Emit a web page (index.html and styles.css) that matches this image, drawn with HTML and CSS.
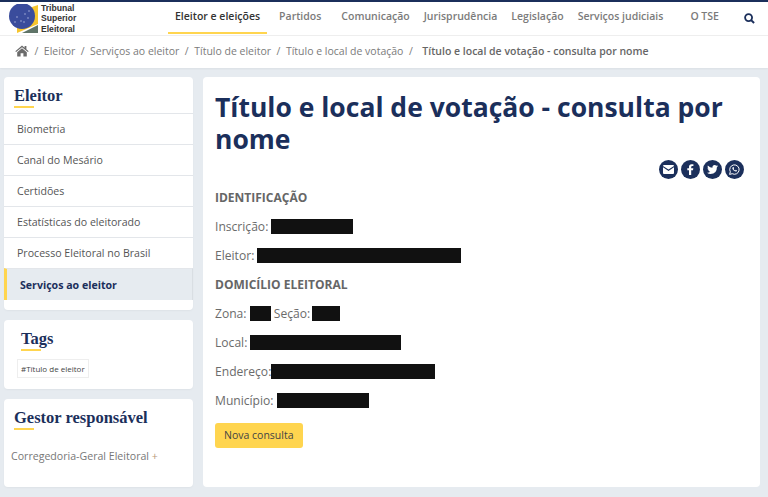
FILE: index.html
```html
<!DOCTYPE html>
<html lang="pt-BR">
<head>
  <meta charset="UTF-8" />
  <title>Título e local de votação - consulta por nome</title>
  <link rel="stylesheet" href="styles.css">
</head>
<body>
  <header class="topbar">
    <a class="logo" href="#">
      <svg class="logo-mark" width="30" height="30" viewBox="0 0 30 30">
        <polygon points="8,8 29,1 29,20 8,29" fill="#f6c52d"/>
        <polygon points="13,29 29,21 29,29" fill="#5f7468"/>
        <circle cx="13" cy="12" r="13" fill="#3a4c9c"/>
        <g fill="#b9c3e6">
          <circle cx="8" cy="13" r="0.7"/>
          <circle cx="12" cy="17" r="0.7"/>
          <circle cx="16" cy="10" r="0.7"/>
          <circle cx="19" cy="14" r="0.7"/>
          <circle cx="15" cy="18" r="0.7"/>
          <circle cx="6" cy="18" r="0.7"/>
          <circle cx="20" cy="7" r="0.7"/>
        </g>
      </svg>
      <span class="logo-text">Tribunal<br>Superior<br>Eleitoral</span>
    </a>
    <ul class="nav">
      <li class="active"><a href="#">Eleitor e eleições</a></li>
      <li class="nav-partidos"><a href="#">Partidos</a></li>
      <li class="nav-wide"><a href="#">Comunicação</a></li>
      <li><a href="#">Jurisprudência</a></li>
      <li><a href="#">Legislação</a></li>
      <li><a href="#">Serviços judiciais</a></li>
      <li class="nav-tse"><a href="#">O TSE</a></li>
    </ul>
    <svg class="search" width="11" height="11" viewBox="0 0 12 12">
      <circle cx="5" cy="5" r="3.8" fill="none" stroke="#1b2f5b" stroke-width="2"/>
      <line x1="7.8" y1="7.8" x2="11" y2="11" stroke="#1b2f5b" stroke-width="2.2"/>
    </svg>
  </header>

  <div class="breadcrumb">
    <svg class="home" width="14" height="12" viewBox="0 0 14 12">
      <path d="M7 0.6 L0.3 6.2 L1.1 7.1 L7 2.2 L12.9 7.1 L13.7 6.2 L11.4 4.3 V1 H9.6 V2.8 Z" fill="#6b6b6b"/>
      <path d="M7 3.2 L2.2 7.2 V11.6 H5.6 V8.2 H8.4 V11.6 H11.8 V7.2 Z" fill="#6b6b6b"/>
    </svg>
    <span>/</span><a href="#">Eleitor</a>
    <span>/</span><a href="#">Serviços ao eleitor</a>
    <span>/</span><a href="#">Título de eleitor</a>
    <span>/</span><a href="#">Título e local de votação</a>
    <span class="sep-last">/</span><strong>Título e local de votação - consulta por nome</strong>
  </div>

  <div class="page">
    <aside class="sidebar">
      <section class="card card-menu">
        <h3 class="side-title">Eleitor</h3>
        <ul class="side-menu">
          <li><a href="#">Biometria</a></li>
          <li><a href="#">Canal do Mesário</a></li>
          <li><a href="#">Certidões</a></li>
          <li><a href="#">Estatísticas do eleitorado</a></li>
          <li><a href="#">Processo Eleitoral no Brasil</a></li>
          <li class="current"><a href="#">Serviços ao eleitor</a></li>
        </ul>
      </section>
      <section class="card card-tags">
        <h3 class="side-title">Tags</h3>
        <a class="tag" href="#">#Título de eleitor</a>
      </section>
      <section class="card card-gestor">
        <h3 class="side-title">Gestor responsável</h3>
        <p class="gestor">Corregedoria-Geral Eleitoral <span>+</span></p>
      </section>
    </aside>

    <main class="content">
      <h1>Título e local de votação - consulta por nome</h1>
      <div class="share">
        <a href="#"><svg width="11" height="9" viewBox="0 0 11 9"><path d="M0 1 Q0 0 1 0 H10 Q11 0 11 1 L5.5 4.6 Z M0 2.3 L5.5 5.9 L11 2.3 V8 Q11 9 10 9 H1 Q0 9 0 8 Z" fill="#fff"/></svg></a>
        <a href="#"><svg width="7" height="11" viewBox="0 0 7 11"><path d="M2 11 V6.2 H0.3 V4.3 H2 V2.8 Q2 0.2 4.6 0.2 H6.4 V2 H5.2 Q4.2 2 4.2 3 V4.3 H6.3 L6 6.2 H4.2 V11 Z" fill="#fff"/></svg></a>
        <a href="#"><svg width="11" height="9" viewBox="0 0 11 9"><path d="M11 1.1 Q10.4 1.4 9.7 1.5 Q10.4 1 10.7 0.2 Q10 0.6 9.3 0.8 Q8.7 0 7.6 0 Q5.4 0 5.4 2.7 Q3 2.6 0.8 0.4 Q0 2.2 1.5 3.4 Q1 3.4 0.5 3.1 Q0.5 4.8 2.2 5.2 Q1.7 5.4 1.2 5.2 Q1.7 6.6 3.3 6.7 Q1.8 7.9 0 7.7 Q1.6 9 3.5 9 Q9.9 9 9.9 2.3 Q10.6 1.8 11 1.1 Z" fill="#fff"/></svg></a>
        <a href="#"><svg width="11" height="11" viewBox="0 0 11 11"><path d="M0.6 10.4 L1.3 7.8 A4.7 4.7 0 1 1 3.2 9.7 Z" fill="none" stroke="#fff" stroke-width="1"/><path d="M3.8 3.2 L4.6 3 L5.1 4.2 L4.6 4.9 Q5.2 5.9 6.2 6.4 L6.9 5.8 L8 6.4 L7.7 7.3 Q6.6 7.9 5 6.8 Q3.4 5.6 3.3 4.2 Q3.3 3.6 3.8 3.2 Z" fill="#fff"/></svg></a>
      </div>
      <h4>IDENTIFICAÇÃO</h4>
      <p>Inscrição: <span class="redact r-inscricao"></span></p>
      <p>Eleitor: <span class="redact r-eleitor"></span></p>
      <h4 class="h-domicilio">DOMICÍLIO ELEITORAL</h4>
      <p>Zona: <span class="redact r-zona"></span> Seção: <span class="redact r-secao"></span></p>
      <p>Local: <span class="redact r-local"></span></p>
      <p>Endereço:<span class="redact r-endereco"></span></p>
      <p>Município: <span class="redact r-municipio"></span></p>
      <a class="btn" href="#">Nova consulta</a>
    </main>
  </div>
</body>
</html>
```

FILE: styles.css
```css
* {
  box-sizing: border-box;
}

body {
  margin: 0;
  background: #e6ebf0;
  color: #6b6b6b;
  font-family: "Open Sans", sans-serif;
  height: 497px;
  overflow: hidden;
}

a {
  color: inherit;
  text-decoration: none;
}

ul {
  list-style: none;
  margin: 0;
  padding: 0;
}

.topbar {
  display: flex;
  align-items: flex-start;
  height: 36px;
  background: #fff;
  border-top: 2px solid #1b2f5b;
  border-bottom: 1px solid #eee;
}

.logo {
  display: flex;
  align-items: center;
  width: 168px;
  height: 33px;
  padding-left: 9px;
  gap: 2px;
}

.logo-mark {
  flex: none;
}

.logo-text {
  font-family: "Liberation Sans", sans-serif;
  font-size: 8.6px;
  font-weight: 700;
  line-height: 10.3px;
  color: #333;
}

.nav {
  display: flex;
  font-size: 10.5px;
  font-weight: 600;
  color: #7b7b7b;
  white-space: nowrap;
}

.nav li {
  display: flex;
  align-items: center;
  padding: 0 7px 2px;
  height: 32px;
  border-bottom: 2px solid transparent;
}

.nav .active {
  color: #333;
  border-bottom-color: #ffd54f;
}

.nav .nav-partidos {
  margin-left: 5px;
}

.nav .nav-wide {
  margin-left: 6px;
}

.nav .nav-tse {
  margin-left: 13px;
}

.search {
  margin: 11px 13px 0 auto;
}

.breadcrumb {
  display: flex;
  align-items: center;
  gap: 5.5px;
  height: 32px;
  padding: 0 15px 2px;
  background: #fff;
  font-size: 10.5px;
  color: #7b7b7b;
  white-space: nowrap;
  box-shadow: 0 1px 2px rgba(0, 0, 0, 0.05);
}

.breadcrumb .sep-last {
  margin-right: 4px;
}

.breadcrumb strong {
  font-weight: 600;
  color: #666;
}

.page {
  display: flex;
  gap: 10px;
  padding: 9px 8px 0 4px;
}

.sidebar {
  width: 189px;
  flex: none;
  display: flex;
  flex-direction: column;
  gap: 10px;
}

.card {
  background: #fff;
  border-radius: 4px;
  box-shadow: 0 1px 2px rgba(0, 0, 0, 0.04);
}

.card-menu {
  height: 233px;
}

.card-tags {
  height: 69px;
  padding-left: 16px;
}

.card-gestor {
  height: 88px;
}

.side-title {
  position: relative;
  margin: 0;
  padding: 9px 0 0 10px;
  font-family: "Liberation Serif", serif;
  font-size: 16.5px;
  font-weight: 700;
  line-height: 20px;
  color: #1b2f5b;
  height: 36px;
}

.side-title::after {
  content: "";
  position: absolute;
  left: 10px;
  top: 29px;
  width: 20px;
  height: 2px;
  background: #ffd54f;
}

.card-tags .side-title {
  padding-left: 1px;
  height: 39px;
}

.card-tags .side-title::after {
  left: 1px;
}

.side-menu li {
  height: 31px;
  display: flex;
  align-items: center;
  padding-left: 13px;
  font-size: 10.6px;
  color: #555;
  border-top: 1px solid #e3e6ea;
}

.side-menu .current {
  height: 32px;
  background: #e6ebf0;
  border-left: 3px solid #ffd54f;
  border-right: 1px solid #d9dee3;
  font-weight: 700;
  color: #1b2f5b;
}

.tag {
  display: block;
  width: fit-content;
  margin-left: -3px;
  padding: 0 3px;
  height: 19px;
  line-height: 18px;
  font-size: 8px;
  color: #444;
  border: 1px solid #eee;
}

.gestor {
  margin: 14px 0 0 7px;
  font-size: 10.6px;
  color: #777;
}

.gestor span {
  color: #b89a7a;
}

.content {
  width: 557px;
  height: 410px;
  padding: 14px 13px 0 12px;
  background: #fff;
  border-radius: 4px;
  font-size: 12.1px;
}

h1 {
  margin: 0;
  font-size: 26.5px;
  font-weight: 700;
  line-height: 32px;
  color: #1b2f5b;
}

.share {
  display: flex;
  justify-content: flex-end;
  gap: 3px;
  margin-top: 5px;
  padding-right: 3px;
}

.share a {
  display: flex;
  align-items: center;
  justify-content: center;
  width: 19px;
  height: 19px;
  border-radius: 50%;
  background: #1b2f5b;
}

h4 {
  margin: 10px 0 12px;
  font-size: 12px;
  font-weight: 700;
  line-height: 17px;
  color: #666;
}

.h-domicilio {
  margin-top: 11px;
}

.content p {
  margin: 0 0 12px;
  line-height: 17px;
  height: 17px;
}

.redact {
  display: inline-block;
  height: 15px;
  vertical-align: -3px;
  background: #111;
}

.r-inscricao { width: 82px; }
.r-eleitor { width: 204px; }
.r-zona { width: 21px; }
.r-secao { width: 28px; margin-left: -1px; }
.r-local { width: 151px; }
.r-endereco { width: 164px; }
.r-municipio { width: 92px; }

.btn {
  display: inline-block;
  margin-top: 2px;
  padding: 0 9px;
  height: 25px;
  line-height: 25px;
  background: #ffd54f;
  border-radius: 3px;
  font-size: 10.5px;
  color: #444;
}
```
